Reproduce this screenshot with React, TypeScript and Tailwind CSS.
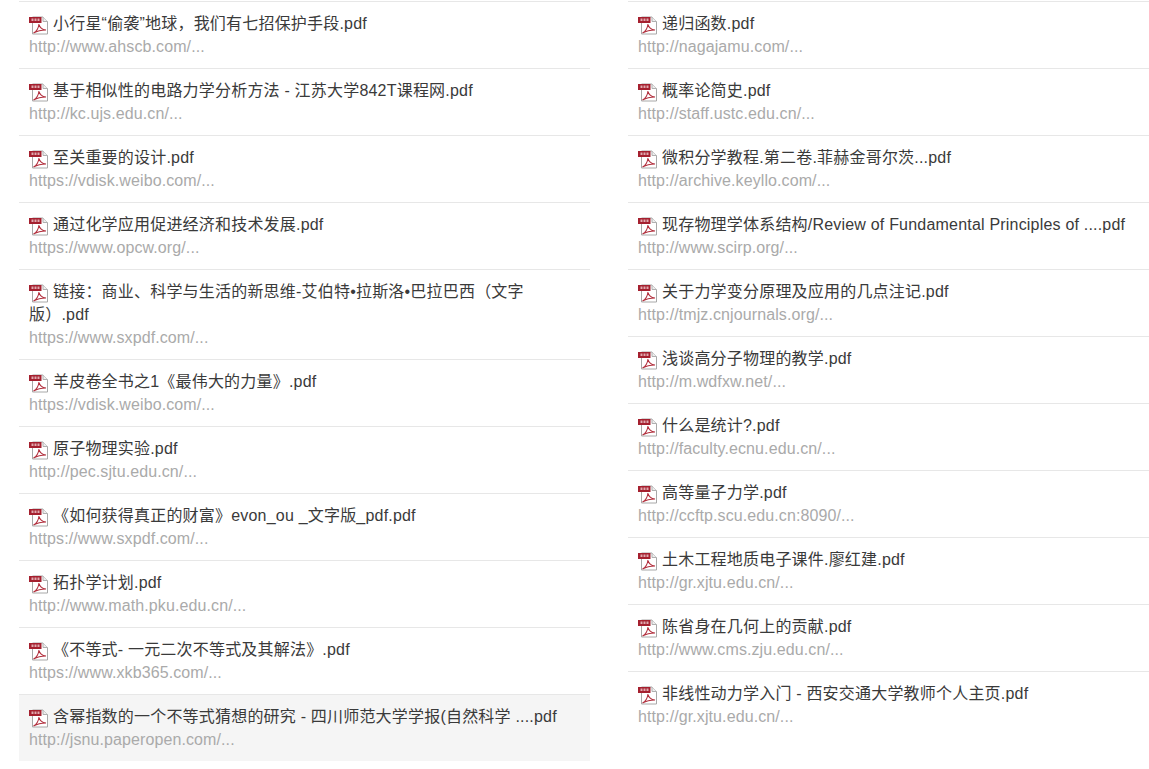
const left: [string, string][] = [
  ["小行星“偷袭”地球，我们有七招保护手段.pdf", "http://www.ahscb.com/..."],
  ["基于相似性的电路力学分析方法 - 江苏大学842T课程网.pdf", "http://kc.ujs.edu.cn/..."],
  ["至关重要的设计.pdf", "https://vdisk.weibo.com/..."],
  ["通过化学应用促进经济和技术发展.pdf", "https://www.opcw.org/..."],
  ["链接：商业、科学与生活的新思维-艾伯特•拉斯洛•巴拉巴西（文字版）.pdf", "https://www.sxpdf.com/..."],
  ["羊皮卷全书之1《最伟大的力量》.pdf", "https://vdisk.weibo.com/..."],
  ["原子物理实验.pdf", "http://pec.sjtu.edu.cn/..."],
  ["《如何获得真正的财富》evon_ou _文字版_pdf.pdf", "https://www.sxpdf.com/..."],
  ["拓扑学计划.pdf", "http://www.math.pku.edu.cn/..."],
  ["《不等式- 一元二次不等式及其解法》.pdf", "https://www.xkb365.com/..."],
  ["含幂指数的一个不等式猜想的研究 - 四川师范大学学报(自然科学 ....pdf", "http://jsnu.paperopen.com/..."],
];

const right: [string, string][] = [
  ["递归函数.pdf", "http://nagajamu.com/..."],
  ["概率论简史.pdf", "http://staff.ustc.edu.cn/..."],
  ["微积分学教程.第二卷.菲赫金哥尔茨...pdf", "http://archive.keyllo.com/..."],
  ["现存物理学体系结构/Review of Fundamental Principles of ....pdf", "http://www.scirp.org/..."],
  ["关于力学变分原理及应用的几点注记.pdf", "http://tmjz.cnjournals.org/..."],
  ["浅谈高分子物理的教学.pdf", "http://m.wdfxw.net/..."],
  ["什么是统计?.pdf", "http://faculty.ecnu.edu.cn/..."],
  ["高等量子力学.pdf", "http://ccftp.scu.edu.cn:8090/..."],
  ["土木工程地质电子课件.廖红建.pdf", "http://gr.xjtu.edu.cn/..."],
  ["陈省身在几何上的贡献.pdf", "http://www.cms.zju.edu.cn/..."],
  ["非线性动力学入门 - 西安交通大学教师个人主页.pdf", "http://gr.xjtu.edu.cn/..."],
];

function PdfIcon() {
  return (
    <svg viewBox="0 0 20 20" className="inline-block w-5 h-5 mr-[4px] align-[-6px]">
      <path d="M3.5 2H14L18.5 6.5V19H3.5Z" fill="#ffffff" stroke="#a8a8a8" strokeWidth="1" />
      <path d="M14 2V6.5H18.5" fill="#eeeeee" stroke="#b0b0b0" strokeWidth="1" />
      <rect x="0" y="2" width="12.5" height="6" fill="#a5202f" />
      <rect x="2.5" y="3.5" width="2" height="2.5" fill="#e0aab0" />
      <rect x="5.5" y="3.5" width="2" height="2.5" fill="#e0aab0" />
      <rect x="8.5" y="3.5" width="2" height="2.5" fill="#e0aab0" />
      <path
        d="M4.5 18C7.5 16.5 9.5 13 10 9C10.5 12 12.5 14.5 17 15C13.5 15 9 15.5 4.5 18Z"
        fill="none"
        stroke="#b2303e"
        strokeWidth="1.1"
      />
    </svg>
  );
}

function Row({ title, url, active }: { title: string; url: string; active?: boolean }) {
  return (
    <li className={`border-t border-[#e7e7e7] p-[10px] ${active ? "bg-[#f5f5f5]" : ""}`}>
      <div className="text-[#3a3a3a] tracking-[0.2px]">
        <PdfIcon />
        {title}
      </div>
      <div className="text-[#aaaaaa] tracking-[0.1px]">{url}</div>
    </li>
  );
}

export default function App() {
  return (
    <div className="flex pt-px pl-[19px] gap-[38px] text-base leading-[23px] bg-white font-['Liberation_Sans','Noto_Sans_CJK_SC',sans-serif] overflow-hidden h-[769px]">
      <ul className="w-[571px] shrink-0">
        {left.map(([t, u], i) => (
          <Row key={i} title={t} url={u} active={i === left.length - 1} />
        ))}
      </ul>
      <ul className="w-[521px] shrink-0">
        {right.map(([t, u], i) => (
          <Row key={i} title={t} url={u} />
        ))}
      </ul>
    </div>
  );
}
